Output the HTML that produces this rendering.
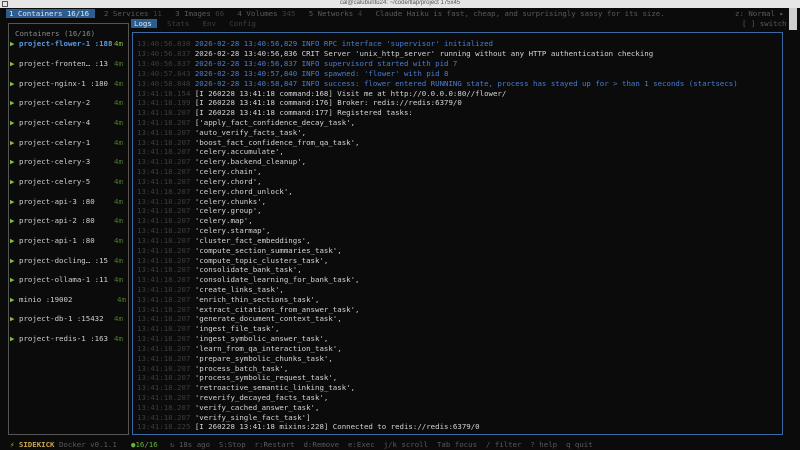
<!DOCTYPE html>
<html><head><meta charset="utf-8"><style>
*{margin:0;padding:0;box-sizing:border-box}
body{width:800px;height:450px;background:#0b0b0c;overflow:hidden;position:relative;font-family:"DejaVu Sans Mono","Liberation Mono",monospace;font-size:7.4px;color:#d0d0d0}
.t{position:absolute;white-space:pre;line-height:9.82px;height:9.82px}
.g{color:#3c3c3c}.b{color:#4a7cd0}.w{color:#d4d4d4}.d{color:#5a5a5a}.dd{color:#3e3e3e}
.ar{color:#8cbc3c}.m{color:#4e7a2c}
</style></head><body>
<div style="position:absolute;left:0;top:0;width:800px;height:8px;background:#e6e6e6"></div>
<div style="position:absolute;left:2px;top:1px;width:6px;height:6px;border:1px solid #555"></div>
<div class="t" style="top:-1px;left:0;width:800px;text-align:center;font-family:'Liberation Sans',sans-serif;font-size:6px;color:#555">cal@calubuntu24: ~/code/tlap/project 175x45</div>
<div style="position:absolute;left:789px;top:8px;width:8px;height:22px;background:#cfcfcf"></div>

<div style="position:absolute;left:6px;top:8.5px;width:89px;height:9px;background:#2c5d8e"></div>
<div class="t" style="top:9px;left:9px;color:#dde8f5">1 Containers 16/16</div>
<div class="t d" style="top:9px;left:104px">2 Services <span class="dd">11</span>   3 Images <span class="dd">66</span>   4 Volumes <span class="dd">345</span>   5 Networks <span class="dd">4</span>   Claude Haiku is fast, cheap, and surprisingly sassy for its size.</div>
<div class="t d" style="top:9px;left:735px">z: Normal ▸</div>
<div class="t d" style="top:19px;left:742px">[ ] switch</div>

<div style="position:absolute;left:131px;top:18.5px;width:26px;height:9px;background:#2c5d8e"></div>
<div class="t" style="top:19px;left:134px;color:#dde8f5">Logs</div>
<div class="t dd" style="top:19px;left:167px">Stats   Env   Config</div>

<div style="position:absolute;left:8px;top:23px;width:121px;height:412px;border:1px solid #555"></div>
<div class="t" style="top:29px;left:15px;color:#8a8a8a">Containers (16/16)</div>
<div style="position:absolute;left:132px;top:32px;width:651px;height:403px;border:1.5px solid #3b6aa3"></div>

<div id="side"></div>
<div id="logs"></div>

<div class="t" style="top:440px;left:10px"><span style="color:#d8b030">⚡</span> <span style="color:#c8a848;font-weight:bold">SIDEKICK</span> <span class="d">Docker v0.1.1</span></div>
<div class="t" style="top:440px;left:131px"><span style="color:#6cb33c">●16/16</span></div>
<div class="t d" style="top:440px;left:170px">↻ 18s ago  S:Stop  r:Restart  d:Remove  e:Exec  j/k scroll  Tab focus  / filter  ? help  q quit</div>

<script>
var items=[["project-flower-1 :188","4m",1],["project-fronten… :13","4m"],["project-nginx-1 :180","4m"],["project-celery-2","4m"],["project-celery-4","4m"],["project-celery-1","4m"],["project-celery-3","4m"],["project-celery-5","4m"],["project-api-3 :80","4m"],["project-api-2 :80","4m"],["project-api-1 :80","4m"],["project-docling… :15","4m"],["project-ollama-1 :11","4m"],["minio :19002","4m",0,1],["project-db-1 :15432","4m"],["project-redis-1 :163","4m"]];
var h="";
items.forEach(function(it,i){var top=10+(3+2*i)*9.82;
h+='<div class="t ar" style="top:'+top+'px;left:10px">▶</div>';
h+='<div class="t" style="top:'+top+'px;left:19px;'+(it[2]?'color:#5a9ae6;font-weight:bold':'color:#cfcfcf')+'">'+it[0]+'</div>';
h+='<div class="t" style="top:'+top+'px;left:'+(it[3]?117:114)+'px;color:'+(it[2]?'#7cc03c':'#4e7a2c')+'">'+it[1]+'</div>';});
document.getElementById("side").outerHTML=h;
var L=[["13:40:56.830","b","2026-02-28 13:40:56,829 INFO RPC interface 'supervisor' initialized"],
["13:40:56.837","w","2026-02-28 13:40:56,836 CRIT Server 'unix_http_server' running without any HTTP authentication checking"],
["13:40:56.837","b","2026-02-28 13:40:56,837 INFO supervisord started with pid 7"],
["13:40:57.843","b","2026-02-28 13:40:57,840 INFO spawned: 'flower' with pid 8"],
["13:40:58.848","b","2026-02-28 13:40:58,847 INFO success: flower entered RUNNING state, process has stayed up for > than 1 seconds (startsecs)"],
["13:41:18.154","w","[I 260228 13:41:18 command:168] Visit me at http://0.0.0.0:80//flower/"],
["13:41:18.199","w","[I 260228 13:41:18 command:176] Broker: redis://redis:6379/0"],
["13:41:18.207","w","[I 260228 13:41:18 command:177] Registered tasks:"]];
var tasks=["['apply_fact_confidence_decay_task',","'auto_verify_facts_task',","'boost_fact_confidence_from_qa_task',","'celery.accumulate',","'celery.backend_cleanup',","'celery.chain',","'celery.chord',","'celery.chord_unlock',","'celery.chunks',","'celery.group',","'celery.map',","'celery.starmap',","'cluster_fact_embeddings',","'compute_section_summaries_task',","'compute_topic_clusters_task',","'consolidate_bank_task',","'consolidate_learning_for_bank_task',","'create_links_task',","'enrich_thin_sections_task',","'extract_citations_from_answer_task',","'generate_document_context_task',","'ingest_file_task',","'ingest_symbolic_answer_task',","'learn_from_qa_interaction_task',","'prepare_symbolic_chunks_task',","'process_batch_task',","'process_symbolic_request_task',","'retroactive_semantic_linking_task',","'reverify_decayed_facts_task',","'verify_cached_answer_task',","'verify_single_fact_task']"];
tasks.forEach(function(t){L.push(["13:41:18.207","w",t]);});
L.push(["13:41:18.225","w","[I 260228 13:41:18 mixins:228] Connected to redis://redis:6379/0"]);
h="";
L.forEach(function(l,i){var top=10+(3+i)*9.82;
h+='<div class="t" style="top:'+top+'px;left:137px"><span class="g">'+l[0]+'</span> <span class="'+l[1]+'">'+l[2].replace(/&/g,"&amp;").replace(/</g,"&lt;").replace(/>/g,"&gt;")+'</span></div>';});
document.getElementById("logs").outerHTML=h;
</script>
</body></html>
